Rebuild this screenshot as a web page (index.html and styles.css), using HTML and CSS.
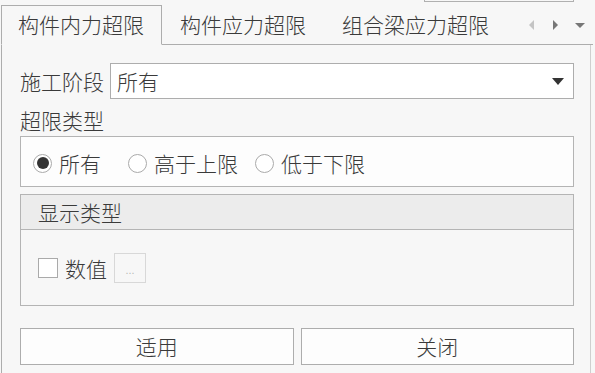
FILE: index.html
```html
<!DOCTYPE html>
<html lang="zh-CN">
<head>
    <meta charset="UTF-8">
    <meta name="viewport" content="width=device-width, initial-scale=1.0">
    <title>超限</title>
    <link rel="stylesheet" href="styles.css">
</head>
<body>
    <div class="window">
        <div class="peek-box"></div>
        <div class="tab-strip">
            <div class="tab active">构件内力超限</div>
            <div class="tab">构件应力超限</div>
            <div class="tab">组合梁应力超限</div>
            <div class="tab-nav">
                <svg width="8" height="12" viewBox="0 0 8 12"><polygon points="6,1 6,11 1,6" fill="#c4c4c4"/></svg>
                <svg width="8" height="12" viewBox="0 0 8 12"><polygon points="2,1 2,11 7,6" fill="#777"/></svg>
                <svg width="12" height="8" viewBox="0 0 12 8"><polygon points="1,2 11,2 6,7" fill="#777"/></svg>
            </div>
        </div>
        <div class="panel">
            <div class="stage-row">
                <span class="field-label">施工阶段</span>
                <div class="combo">
                    <span>所有</span>
                    <svg width="12" height="7" viewBox="0 0 12 7"><polygon points="0,0 12,0 6,7" fill="#333"/></svg>
                </div>
            </div>
            <div class="section-label">超限类型</div>
            <div class="radio-group">
                <label class="radio radio-first"><span class="dot checked"></span>所有</label>
                <label class="radio radio-second"><span class="dot"></span>高于上限</label>
                <label class="radio"><span class="dot"></span>低于下限</label>
            </div>
            <div class="display-group">
                <div class="group-head">显示类型</div>
                <div class="group-body">
                    <span class="check"></span>
                    <span class="check-text">数值</span>
                    <span class="more-btn">...</span>
                </div>
            </div>
            <div class="actions">
                <div class="btn">适用</div>
                <div class="btn">关闭</div>
            </div>
        </div>
    </div>
</body>
</html>
```

FILE: styles.css
```css
body {
    margin: 0;
    background-color: #f7f7f7;
    color: #3a3a3a;
    font-family: "Noto Sans CJK SC", "Noto Sans", sans-serif;
    font-size: 21px;
    font-weight: 300;
    overflow: hidden;
}
.window {
    position: relative;
    width: 595px;
    height: 373px;
    padding-left: 1px;
    box-sizing: border-box;
}
.peek-box {
    position: absolute;
    left: 424px;
    top: -10px;
    width: 148px;
    height: 10px;
    border: 1px solid #b0b0b0;
    background: #f7f7f7;
}
.tab-strip {
    display: flex;
    align-items: flex-end;
    height: 45px;
    width: 592px;
}
.tab {
    height: 38px;
    line-height: 37px;
    padding: 0 18px;
    border-bottom: 1px solid #adadad;
    white-space: nowrap;
}
.tab.active {
    height: 38px;
    padding: 0 17px 0 16px;
    border: 1px solid #adadad;
    border-bottom: 1px solid #f7f7f7;
}
.tab-nav {
    flex: 1;
    height: 38px;
    border-bottom: 1px solid #adadad;
    display: flex;
    align-items: center;
    justify-content: flex-end;
    gap: 15px;
    padding-right: 7px;
}
.panel {
    width: 590px;
    height: 340px;
    border-left: 1px solid #adadad;
    border-right: 1px solid #cfcfcf;
    padding: 18px 16px 0 18px;
    box-sizing: border-box;
}
.stage-row {
    display: flex;
    align-items: center;
    gap: 6px;
}
.field-label {
    white-space: nowrap;
}
.combo {
    flex: 1;
    height: 36px;
    box-sizing: border-box;
    border: 1px solid #adadad;
    background: #fff;
    display: flex;
    align-items: center;
    justify-content: space-between;
    padding: 0 9px 0 6px;
}
.section-label {
    padding: 8px 0 2px;
    line-height: 27px;
}
.radio-group {
    height: 51px;
    box-sizing: border-box;
    border: 1px solid #b4b4b4;
    background: #fdfdfd;
    display: flex;
    align-items: center;
    padding: 3px 0 0 12px;
}
.radio {
    display: flex;
    align-items: center;
    gap: 7px;
    white-space: nowrap;
}
.radio-first {
    width: 95px;
}
.radio-second {
    width: 127px;
}
.dot {
    width: 19px;
    height: 19px;
    box-sizing: border-box;
    border: 1px solid #aaa;
    border-radius: 50%;
    background: #fff;
    display: flex;
    align-items: center;
    justify-content: center;
}
.dot.checked::after {
    content: "";
    width: 12px;
    height: 12px;
    border-radius: 50%;
    background: #333;
}
.display-group {
    margin-top: 7px;
    height: 112px;
    box-sizing: border-box;
    border: 1px solid #b4b4b4;
}
.group-head {
    height: 34px;
    line-height: 34px;
    background: #ececec;
    border-bottom: 1px solid #b4b4b4;
    padding-left: 17px;
}
.group-body {
    height: 76px;
    display: flex;
    align-items: center;
    padding-left: 17px;
}
.check {
    width: 20px;
    height: 20px;
    box-sizing: border-box;
    border: 1px solid #aaa;
    background: #fff;
}
.check-text {
    margin-left: 7px;
}
.more-btn {
    margin-left: 7px;
    width: 32px;
    height: 30px;
    box-sizing: border-box;
    border: 1px solid #d8d8d8;
    color: #aaa;
    font-size: 12px;
    line-height: 30px;
    text-align: center;
}
.actions {
    margin-top: 22px;
    display: flex;
    gap: 7px;
}
.btn {
    flex: 1;
    height: 37px;
    line-height: 35px;
    box-sizing: border-box;
    border: 1px solid #adadad;
    background: #fdfdfd;
    text-align: center;
}
```
